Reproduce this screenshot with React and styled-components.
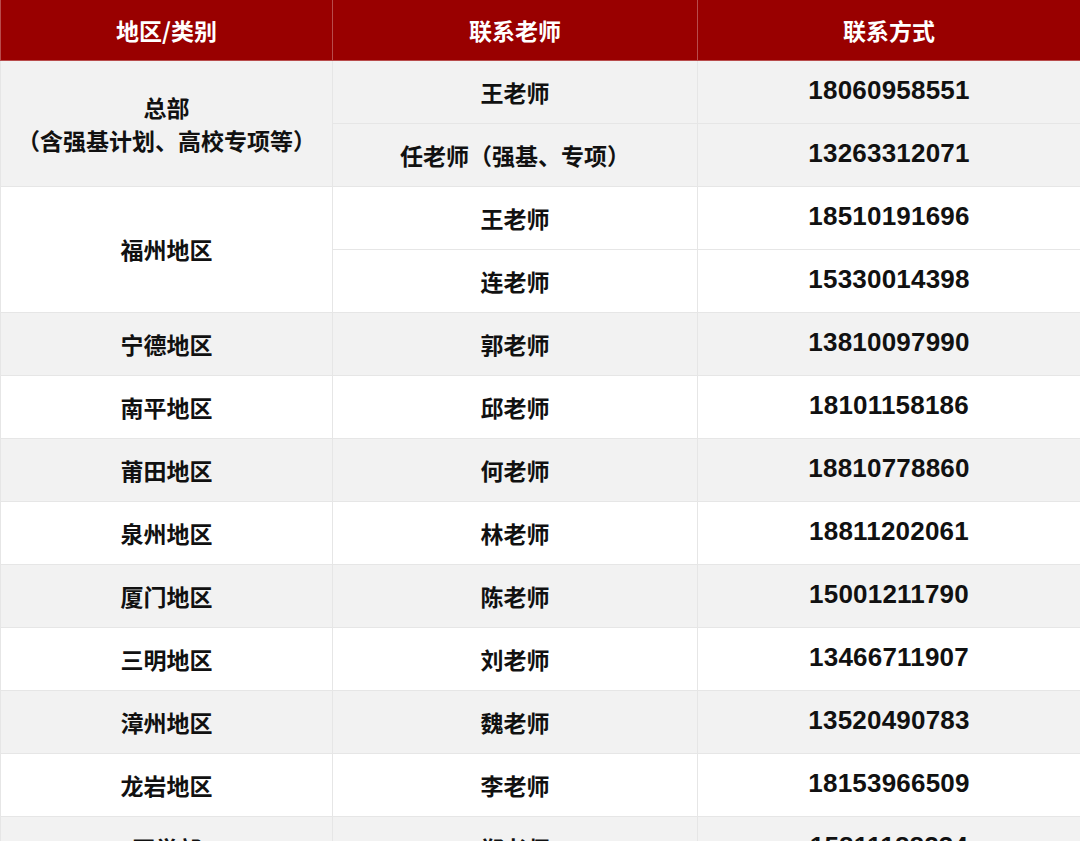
import React from 'react';
import styled, { createGlobalStyle } from 'styled-components';

const Global = createGlobalStyle`
  body {
    margin: 0;
    background: #fff;
    font-family: "Noto Sans CJK SC", "Noto Sans", sans-serif;
  }
`;

const Table = styled.table`
  width: 1080px;
  border-collapse: collapse;
  table-layout: fixed;
`;

const HeadCell = styled.th`
  height: 60px;
  padding: 0;
  background: #990000;
  color: #fff;
  font-size: 23px;
  font-weight: 700;
  border: 1px solid #b84c4c;
  border-top: none;
`;

const Cell = styled.td`
  height: 59px;
  padding: 0;
  text-align: center;
  vertical-align: middle;
  font-size: 23px;
  font-weight: 700;
  color: #111;
  line-height: 1.4;
  background: ${p => (p.$gray ? '#f2f2f2' : '#fff')};
  border: 1px solid #e6e6e6;
`;

const Phone = styled(Cell)`
  font-family: "Liberation Sans", Arial, sans-serif;
  font-size: 26px;
  letter-spacing: 0.2px;
  padding-bottom: 3px;
`;

const rows = [
  ['宁德地区', '郭老师', '13810097990'],
  ['南平地区', '邱老师', '18101158186'],
  ['莆田地区', '何老师', '18810778860'],
  ['泉州地区', '林老师', '18811202061'],
  ['厦门地区', '陈老师', '15001211790'],
  ['三明地区', '刘老师', '13466711907'],
  ['漳州地区', '魏老师', '13520490783'],
  ['龙岩地区', '李老师', '18153966509'],
  ['医学部', '郑老师', '15811188234'],
];

export default function App() {
  return (
    <>
      <Global />
      <Table>
        <colgroup>
          <col style={{ width: 332 }} />
          <col style={{ width: 365 }} />
          <col style={{ width: 383 }} />
        </colgroup>
        <thead>
          <tr>
            <HeadCell>地区/类别</HeadCell>
            <HeadCell>联系老师</HeadCell>
            <HeadCell>联系方式</HeadCell>
          </tr>
        </thead>
        <tbody>
          <tr>
            <Cell $gray rowSpan={2}>总部<br />（含强基计划、高校专项等）</Cell>
            <Cell $gray>王老师</Cell>
            <Phone $gray>18060958551</Phone>
          </tr>
          <tr>
            <Cell $gray>任老师（强基、专项）</Cell>
            <Phone $gray>13263312071</Phone>
          </tr>
          <tr>
            <Cell rowSpan={2}>福州地区</Cell>
            <Cell>王老师</Cell>
            <Phone>18510191696</Phone>
          </tr>
          <tr>
            <Cell>连老师</Cell>
            <Phone>15330014398</Phone>
          </tr>
          {rows.map((r, i) => (
            <tr key={r[0]}>
              <Cell $gray={i % 2 === 0}>{r[0]}</Cell>
              <Cell $gray={i % 2 === 0}>{r[1]}</Cell>
              <Phone $gray={i % 2 === 0}>{r[2]}</Phone>
            </tr>
          ))}
        </tbody>
      </Table>
    </>
  );
}
